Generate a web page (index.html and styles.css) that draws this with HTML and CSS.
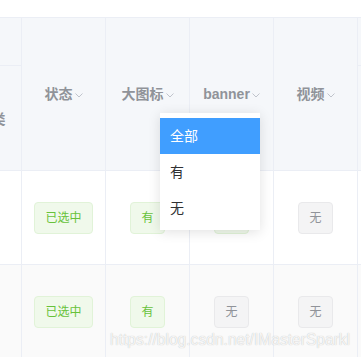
FILE: index.html
```html
<!DOCTYPE html>
<html lang="zh-CN">
<head>
  <meta charset="UTF-8" />
  <title>列表筛选</title>
  <link rel="stylesheet" href="styles.css">
</head>
<body>
  <div class="page">
    <div class="table-wrap">
      <table class="data-table">
        <colgroup>
          <col class="col-first">
          <col class="col">
          <col class="col">
          <col class="col">
          <col class="col">
          <col class="col">
        </colgroup>
        <thead>
          <tr class="head-top">
            <th></th>
            <th rowspan="2"><span class="th-label">状态<svg class="caret" viewBox="0 0 8 5"><polyline points="0.5,0.5 4,4 7.5,0.5"/></svg></span></th>
            <th rowspan="2"><span class="th-label">大图标<svg class="caret" viewBox="0 0 8 5"><polyline points="0.5,0.5 4,4 7.5,0.5"/></svg></span></th>
            <th rowspan="2"><span class="th-label">banner<svg class="caret" viewBox="0 0 8 5"><polyline points="0.5,0.5 4,4 7.5,0.5"/></svg></span></th>
            <th rowspan="2"><span class="th-label">视频<svg class="caret" viewBox="0 0 8 5"><polyline points="0.5,0.5 4,4 7.5,0.5"/></svg></span></th>
            <th></th>
          </tr>
          <tr class="head-bottom">
            <th class="th-plain">分类</th>
            <th></th>
          </tr>
        </thead>
        <tbody>
          <tr>
            <td></td>
            <td><span class="tag tag-success">已选中</span></td>
            <td><span class="tag tag-success">有</span></td>
            <td><span class="tag tag-success">有</span></td>
            <td><span class="tag tag-info">无</span></td>
            <td></td>
          </tr>
          <tr class="striped">
            <td></td>
            <td><span class="tag tag-success">已选中</span></td>
            <td><span class="tag tag-success">有</span></td>
            <td><span class="tag tag-info">无</span></td>
            <td><span class="tag tag-info">无</span></td>
            <td></td>
          </tr>
        </tbody>
      </table>
    </div>

    <!-- filter dropdown for the banner column -->
    <ul class="filter-menu">
      <li class="active">全部</li>
      <li>有</li>
      <li>无</li>
    </ul>

    <div class="watermark">https://blog.csdn.net/IMasterSparkl</div>
  </div>
</body>
</html>
```

FILE: styles.css
```css
body {
  margin: 0;
  background: #ffffff;
  font-family: "Liberation Sans", "Noto Sans CJK SC", sans-serif;
}

.page {
  position: relative;
  width: 361px;
  height: 357px;
  overflow: hidden;
}

.table-wrap {
  padding-top: 17px;
  overflow: hidden;
}

.data-table {
  table-layout: fixed;
  width: 480px;
  margin-left: -38px;
  border-collapse: separate;
  border-spacing: 0;
  border-top: 1px solid #ebeef5;
  font-size: 14px;
}

.col-first {
  width: 60px;
}

.col {
  width: 84px;
}

.data-table th,
.data-table td {
  padding: 0;
  border-right: 1px solid #ebeef5;
  border-bottom: 1px solid #ebeef5;
  text-align: center;
  vertical-align: middle;
}

.data-table th {
  background-color: #f5f7fa;
  color: #909399;
  font-weight: bold;
}

.head-top {
  height: 48px;
}

.head-bottom {
  height: 105px;
}

tbody tr {
  height: 94px;
}

tbody tr.striped td {
  background-color: #fafafa;
}

.th-label {
  display: inline-flex;
  align-items: center;
  gap: 2px;
  line-height: 20px;
}

.th-plain {
  font-weight: normal;
}

.caret {
  width: 8px;
  height: 5px;
  margin-top: 2px;
  fill: none;
  stroke: #c0c4cc;
  stroke-width: 1;
}

.tag {
  display: inline-block;
  box-sizing: border-box;
  height: 32px;
  line-height: 30px;
  padding: 0 10px;
  font-size: 12px;
  border-radius: 4px;
  border: 1px solid;
  white-space: nowrap;
}

.tag-success {
  background-color: #f0f9eb;
  border-color: #e1f3d8;
  color: #67c23a;
}

.tag-info {
  background-color: #f4f4f5;
  border-color: #e9e9eb;
  color: #909399;
}

/* Dropdown */
.filter-menu {
  position: absolute;
  left: 160px;
  top: 113px;
  width: 100px;
  margin: 0;
  padding: 5px 0 4px;
  list-style: none;
  background: #ffffff;
  box-shadow: 0 2px 12px rgba(0, 0, 0, 0.12);
  font-size: 14px;
  color: #303133;
}

.filter-menu li {
  line-height: 36px;
  padding: 0 10px;
}

.filter-menu li.active {
  background-color: #409eff;
  color: #ffffff;
}

.watermark {
  position: absolute;
  left: 110px;
  top: 331px;
  font-family: "Liberation Sans", Arial, sans-serif;
  font-size: 15.6px;
  color: rgba(255, 255, 255, 0.85);
  text-shadow: 0 0 1px rgba(0, 0, 0, 0.28);
  white-space: nowrap;
}
```
